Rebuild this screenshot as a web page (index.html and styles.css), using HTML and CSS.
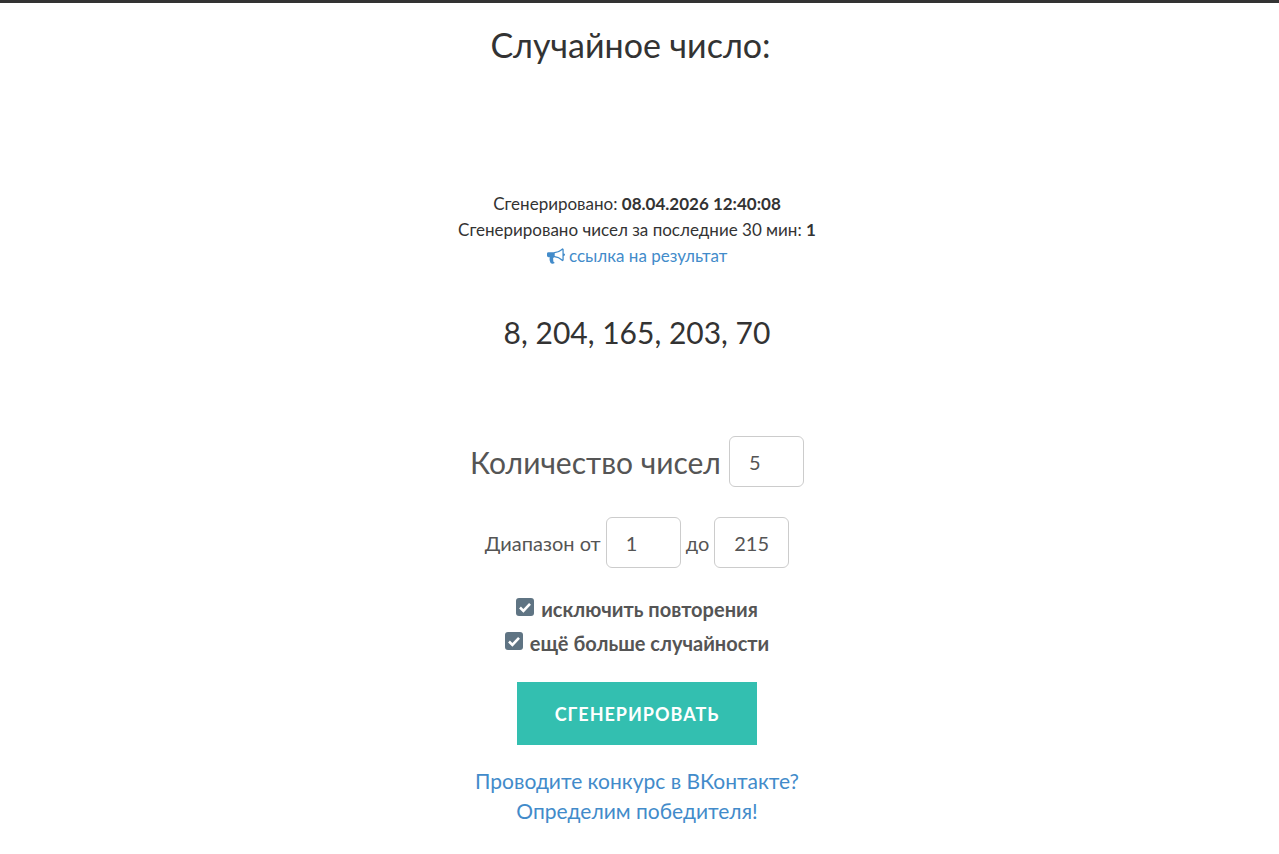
FILE: index.html
```html
<!DOCTYPE html>
<html lang="en">
<head>
  <meta charset="UTF-8">
  <title>Случайное число</title>
  <link rel="stylesheet" href="styles.css">
</head>
<body>

  <div class="container">
    <!-- Result Section -->
    <h1 class="title">Случайное число:</h1>

    <div class="meta">
      <div>Сгенерировано: <b>08.04.2026 12:40:08</b></div>
      <div>Сгенерировано чисел за последние 30 мин: <b>1</b></div>
      <div>
        <a href="#">
          <svg class="horn" viewBox="0 0 1792 1792"><path d="M1664 640q53 0 90.5 37.5t37.5 90.5-37.5 90.5-90.5 37.5v384q0 52-38 90t-90 38q-417-347-812-380-58 19-91 66t-31 100.5 40 92.5q-20 33-23 65.5t6 58 33.5 55 48 50 61.5 50.5q-29 58-111.5 83t-168.5 11.5-132-55.5q-7-23-29.5-87.5t-32-94.5-23-89-15-101 3.5-98.5 22-110.5h-122q-66 0-113-47t-47-113v-192q0-66 47-113t113-47h480q435 0 896-384 52 0 90 38t38 90v384zm-128 604v-954q-394 302-768 343v270q377 42 768 341z"/></svg>
          ссылка на результат
        </a>
      </div>
    </div>

    <div class="numbers">8, 204, 165, 203, 70</div>

    <!-- Form Section -->
    <form class="gen-form">
      <div class="row row-big">
        <label>Количество чисел</label>
        <input type="text" value="5">
      </div>
      <div class="row row-small">
        <label>Диапазон от</label>
        <input type="text" value="1">
        <label>до</label>
        <input type="text" value="215">
      </div>
      <div class="check">
        <svg class="box" viewBox="0 0 18 18"><rect width="18" height="18" rx="3"/><path d="M4 9.5l3.4 3.4L14 5.8"/></svg>
        <span>исключить повторения</span>
      </div>
      <div class="check">
        <svg class="box" viewBox="0 0 18 18"><rect width="18" height="18" rx="3"/><path d="M4 9.5l3.4 3.4L14 5.8"/></svg>
        <span>ещё больше случайности</span>
      </div>
      <button type="submit">Сгенерировать</button>
    </form>

    <div class="contest">
      <a href="#">Проводите конкурс в ВКонтакте?</a><br>
      <a href="#">Определим победителя!</a>
    </div>
  </div>

</body>
</html>
```

FILE: styles.css
```css
* {
  box-sizing: border-box;
}

body {
  margin: 0;
  border-top: 3px solid #333;
  background: #fff;
  color: #333;
  font-family: 'Lato', 'Open Sans', sans-serif;
}

a {
  color: #428bca;
  text-decoration: none;
}

.container {
  width: 1274px;
  text-align: center;
}

.title {
  margin: 0;
  padding: 21px 13px 0 0;
  font-size: 34px;
  line-height: 42px;
  font-weight: 400;
}

/* Date and link */
.meta {
  margin-top: 125px;
  font-size: 17px;
  line-height: 26px;
}

.horn {
  width: 18px;
  height: 18px;
  fill: #428bca;
  vertical-align: -3px;
}

.numbers {
  margin-top: 42px;
  font-size: 30px;
  line-height: 42px;
}

/* Form */
.gen-form {
  margin-top: 83px;
  color: #555;
}

.row {
  display: flex;
  justify-content: center;
  align-items: center;
}

.row input {
  width: 75px;
  height: 51px;
  padding: 0 19px;
  border: 1px solid #ccc;
  border-radius: 6px;
  color: #555;
  font-family: inherit;
  font-size: 20px;
}

.row-big {
  gap: 8px;
  font-size: 30px;
}

.row-small {
  gap: 5px;
  margin-top: 30px;
  font-size: 20px;
}

.check {
  display: flex;
  justify-content: center;
  align-items: center;
  gap: 7px;
  height: 34px;
  font-size: 20px;
  font-weight: 700;
}

.row-small + .check {
  margin-top: 24px;
}

.box {
  width: 18px;
  height: 18px;
  margin-top: -4px;
}

.box rect {
  fill: #5f7483;
}

.box path {
  fill: none;
  stroke: #fff;
  stroke-width: 2.6;
}

button {
  display: block;
  width: 240px;
  height: 63px;
  margin: 22px auto 0;
  border: none;
  background-color: #33bfb0;
  color: #fff;
  font-family: inherit;
  font-size: 18px;
  font-weight: 700;
  letter-spacing: 1px;
  text-transform: uppercase;
}

.contest {
  margin-top: 21px;
  font-size: 21px;
  line-height: 30px;
}
```
